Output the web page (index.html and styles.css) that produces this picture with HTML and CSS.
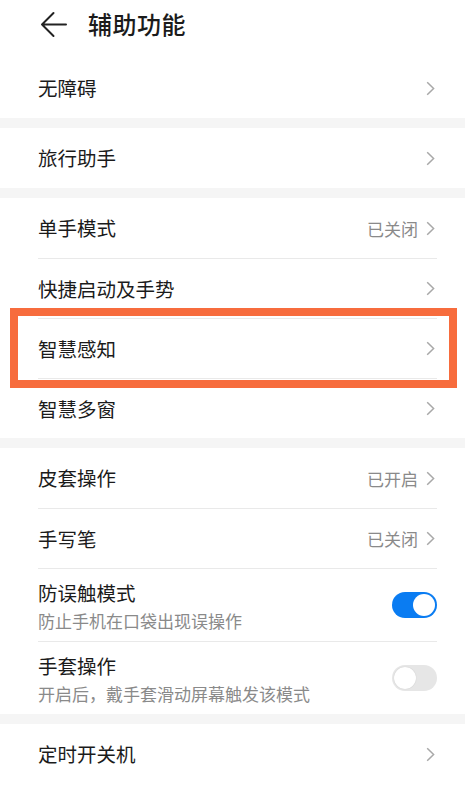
FILE: index.html
```html
<!DOCTYPE html>
<html lang="zh-CN">
<head>
    <meta charset="UTF-8">
    <meta name="viewport" content="width=device-width, initial-scale=1.0">
    <title>辅助功能</title>
    <link rel="stylesheet" href="styles.css">
</head>
<body>

    <!-- Header -->
    <div class="header">
        <svg class="back-icon" width="27" height="27" viewBox="0 0 27 27">
            <path d="M2 13.5 H26 M13.5 2 L2 13.5 L13.5 25" fill="none" stroke="#222" stroke-width="2" stroke-linecap="round" stroke-linejoin="round"/>
        </svg>
        <h1 class="header-title">辅助功能</h1>
    </div>

    <div class="group">
        <div class="row">
            <span class="row-title">无障碍</span>
            <span class="chevron"></span>
        </div>
    </div>

    <div class="group">
        <div class="row">
            <span class="row-title">旅行助手</span>
            <span class="chevron"></span>
        </div>
    </div>

    <div class="group">
        <div class="row">
            <span class="row-title">单手模式</span>
            <span class="row-value">已关闭</span>
            <span class="chevron"></span>
        </div>
        <div class="row">
            <span class="row-title">快捷启动及手势</span>
            <span class="chevron"></span>
        </div>
        <div class="row">
            <span class="row-title">智慧感知</span>
            <span class="chevron"></span>
            <!-- highlight frame -->
            <div class="highlight"></div>
        </div>
        <div class="row">
            <span class="row-title">智慧多窗</span>
            <span class="chevron"></span>
        </div>
    </div>

    <div class="group">
        <div class="row">
            <span class="row-title">皮套操作</span>
            <span class="row-value">已开启</span>
            <span class="chevron"></span>
        </div>
        <div class="row">
            <span class="row-title">手写笔</span>
            <span class="row-value">已关闭</span>
            <span class="chevron"></span>
        </div>
        <div class="row tall">
            <div class="row-text">
                <span class="row-title">防误触模式</span>
                <span class="row-sub">防止手机在口袋出现误操作</span>
            </div>
            <span class="switch on"></span>
        </div>
        <div class="row tall">
            <div class="row-text">
                <span class="row-title">手套操作</span>
                <span class="row-sub">开启后，戴手套滑动屏幕触发该模式</span>
            </div>
            <span class="switch"></span>
        </div>
    </div>

    <div class="group">
        <div class="row">
            <span class="row-title">定时开关机</span>
            <span class="chevron"></span>
        </div>
    </div>

</body>
</html>
```

FILE: styles.css
```css
* {
    box-sizing: border-box;
}

body {
    font-family: 'Noto Sans CJK SC', 'Noto Sans', sans-serif;
    margin: 0;
    padding: 0;
    background-color: #fff;
    color: #1b1b1b;
}

.header {
    display: flex;
    align-items: center;
    height: 58px;
    padding: 0 0 10px 40px;
}

.back-icon {
    display: block;
}

.header-title {
    margin: 0 0 0 21px;
    font-size: 24px;
    font-weight: 500;
    line-height: 30px;
    letter-spacing: 0.5px;
}

.group {
    padding: 0 28px 0 38px;
    border-top: 10px solid #f5f5f5;
}

.group:nth-of-type(2) {
    border-top: none;
}

.header + .group {
    border-top: none;
}

.row {
    position: relative;
    display: flex;
    align-items: center;
    height: 60px;
    border-top: 1px solid #e9e9e9;
}

.row:first-child {
    border-top: none;
}

.row.tall {
    height: 73px;
}

.row-title {
    flex: 1;
    font-size: 19.5px;
    line-height: 26px;
}

.row-text {
    flex: 1;
    display: flex;
    flex-direction: column;
    padding-top: 2px;
}

.row-sub {
    font-size: 17px;
    line-height: 24px;
    color: #8a8a8a;
    margin-top: 3px;
}

.row-value {
    font-size: 17px;
    color: #8a8a8a;
    margin-right: 8px;
}

.chevron {
    width: 9px;
    height: 15px;
    margin-right: 2px;
    background: no-repeat center / 9px 15px;
    background-image: url("data:image/svg+xml,%3Csvg xmlns='http://www.w3.org/2000/svg' width='9' height='15' viewBox='0 0 9 15'%3E%3Cpath d='M1.2 1.2 L7.6 7.5 L1.2 13.8' fill='none' stroke='%23a8a8a8' stroke-width='1.5'/%3E%3C/svg%3E");
}

.switch {
    position: relative;
    width: 45px;
    height: 26px;
    border-radius: 13px;
    background-color: #e6e6e6;
}

.switch::after {
    content: '';
    position: absolute;
    top: 2px;
    left: 2px;
    width: 22px;
    height: 22px;
    border-radius: 50%;
    background-color: #fff;
    box-shadow: 0 0 1px rgba(0, 0, 0, 0.2);
}

.switch.on {
    background-color: #0a7cf2;
}

.switch.on::after {
    left: 21px;
    box-shadow: none;
}

.highlight {
    position: absolute;
    top: -11px;
    bottom: -10px;
    left: -28px;
    right: -20px;
    border: 8px solid #f76c3d;
    pointer-events: none;
}
```
